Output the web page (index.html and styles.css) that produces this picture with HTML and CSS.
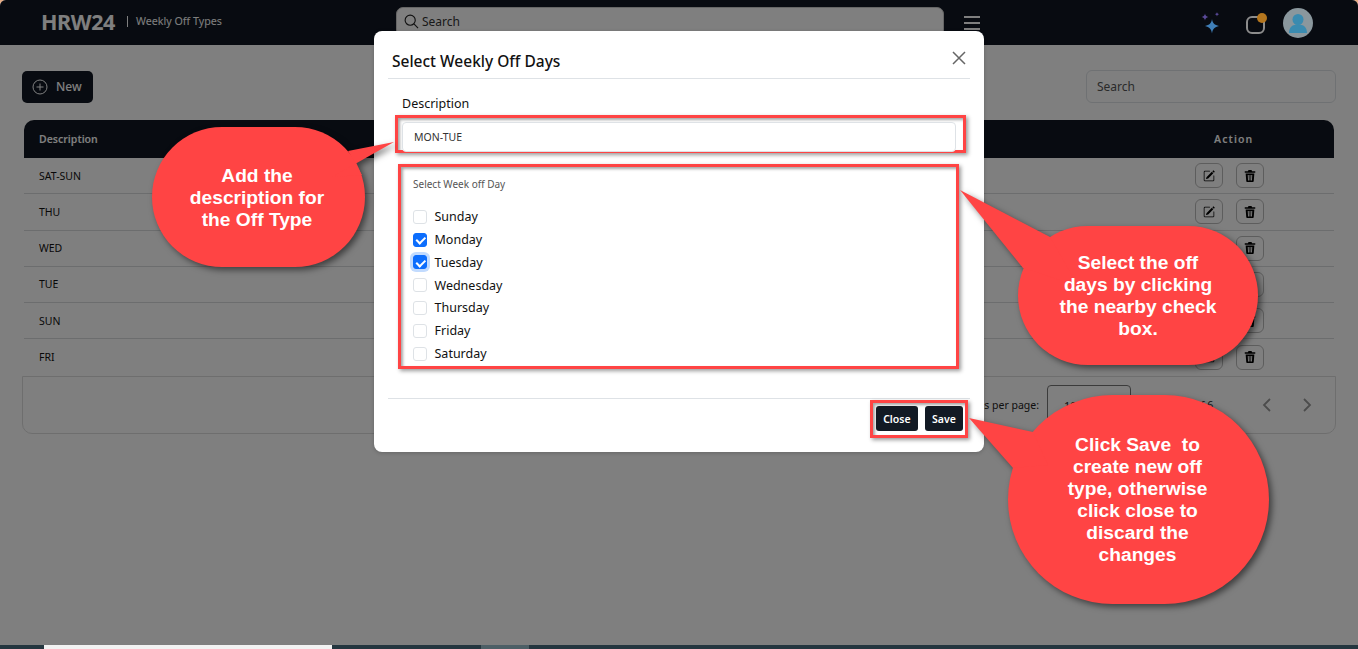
FILE: index.html
```html
<!DOCTYPE html>
<html lang="en">
<head>
  <meta charset="UTF-8" />
  <meta name="viewport" content="width=device-width, initial-scale=1.0"/>
  <title>Weekly Off Types • HRW24</title>
  <link rel="stylesheet" href="styles.css">
</head>

<body>
  <div class="screen">
    <header class="topbar">
      <div class="brand">HRW24</div>
      <div class="page-name">Weekly Off Types</div>
      <div class="top-search">
        <svg class="top-search-icon" viewBox="0 0 16 16"><circle cx="6.6" cy="6.6" r="5.4"/><path d="M10.6 10.6 15 15"/></svg>
        <span>Search</span>
      </div>
      <svg class="menu-icon" viewBox="0 0 16 14"><path d="M0 1h16M0 7h16M0 13h16"/></svg>
      <div class="top-icons">
        <svg class="sparkle" viewBox="0 0 24 26">
          <path class="star-blue" d="M13 8c.6 4 2.500 6 7 7-4.500 1-6.400 3-7 7.500-.6-4.500-2.500-6.500-7-7.500 4.500-1 6.400-3 7-7z"/>
          <path class="star-purple" d="M6 2.500c.3 2 1.200 3 3.400 3.500-2.200.5-3.100 1.500-3.400 3.500C5.700 7.500 4.800 6.500 2.600 6 4.800 5.500 5.700 4.500 6 2.500z"/>
          <path class="star-purple" d="M18 1c.2 1.200.7 1.800 2.200 2.200-1.500.4-2 1-2.200 2.200-.2-1.200-.7-1.800-2.200-2.200 1.500-.4 2-1 2.200-2.200z"/>
        </svg>
        <div class="notify"><span class="notify-dot"></span></div>
        <div class="avatar">
          <svg viewBox="0 0 30 30"><circle cx="15" cy="11.500" r="5.500"/><path d="M6 25c0-6 3.500-8.500 9-8.500s9 2.500 9 8.500z"/></svg>
        </div>
      </div>
    </header>

    <main class="content">
      <div class="toolbar">
        <button class="new-btn">
          <svg viewBox="0 0 16 16"><circle cx="8" cy="8" r="7"/><path d="M8 4.500v7M4.500 8h7"/></svg>
          New
        </button>
        <input class="table-search" type="text" placeholder="Search" />
      </div>

      <div class="table-wrap">
        <table class="off-table">
          <thead>
            <tr><th>Description</th><th class="action-col">Action</th></tr>
          </thead>
          <tbody>
            <tr><td>SAT-SUN</td><td class="action-col"><div class="actions"><button class="icon-btn"><svg viewBox="0 0 16 16"><use href="#ico-edit"/></svg></button><button class="icon-btn"><svg viewBox="0 0 16 16"><use href="#ico-trash"/></svg></button></div></td></tr>
            <tr><td>THU</td><td class="action-col"><div class="actions"><button class="icon-btn"><svg viewBox="0 0 16 16"><use href="#ico-edit"/></svg></button><button class="icon-btn"><svg viewBox="0 0 16 16"><use href="#ico-trash"/></svg></button></div></td></tr>
            <tr><td>WED</td><td class="action-col"><div class="actions"><button class="icon-btn"><svg viewBox="0 0 16 16"><use href="#ico-edit"/></svg></button><button class="icon-btn"><svg viewBox="0 0 16 16"><use href="#ico-trash"/></svg></button></div></td></tr>
            <tr><td>TUE</td><td class="action-col"><div class="actions"><button class="icon-btn"><svg viewBox="0 0 16 16"><use href="#ico-edit"/></svg></button><button class="icon-btn"><svg viewBox="0 0 16 16"><use href="#ico-trash"/></svg></button></div></td></tr>
            <tr><td>SUN</td><td class="action-col"><div class="actions"><button class="icon-btn"><svg viewBox="0 0 16 16"><use href="#ico-edit"/></svg></button><button class="icon-btn"><svg viewBox="0 0 16 16"><use href="#ico-trash"/></svg></button></div></td></tr>
            <tr><td>FRI</td><td class="action-col"><div class="actions"><button class="icon-btn"><svg viewBox="0 0 16 16"><use href="#ico-edit"/></svg></button><button class="icon-btn"><svg viewBox="0 0 16 16"><use href="#ico-trash"/></svg></button></div></td></tr>
          </tbody>
        </table>
      </div>

      <div class="pager">
        <span class="per-page">Items per page:</span>
        <div class="per-page-select">10</div>
        <span class="range">1 – 6 of 6</span>
        <svg class="chevron" viewBox="0 0 10 16"><path d="M8 2 2 8l6 6"/></svg>
        <svg class="chevron" viewBox="0 0 10 16"><path d="m2 2 6 6-6 6"/></svg>
      </div>
    </main>

    <div class="taskbar">
      <div class="task-window"></div>
      <div class="task-active"></div>
    </div>

    <!-- modal + dimmed page -->
    <div class="backdrop">
      <div class="modal">
        <div class="modal-header">
          <h2>Select Weekly Off Days</h2>
          <svg class="modal-close" viewBox="0 0 14 14"><path d="m1 1 12 12M13 1 1 13"/></svg>
        </div>
        <label class="desc-label" for="desc">Description</label>
        <div class="mark mark-desc">
          <input id="desc" class="desc-input" type="text" value="MON-TUE" />
        </div>
        <div class="mark mark-days">
          <div class="days-title">Select Week off Day</div>
          <label class="day"><input type="checkbox" />Sunday</label>
          <label class="day"><input type="checkbox" checked />Monday</label>
          <label class="day"><input class="focused" type="checkbox" checked />Tuesday</label>
          <label class="day"><input type="checkbox" />Wednesday</label>
          <label class="day"><input type="checkbox" />Thursday</label>
          <label class="day"><input type="checkbox" />Friday</label>
          <label class="day"><input type="checkbox" />Saturday</label>
        </div>
        <div class="modal-footer">
          <div class="mark mark-btns">
            <button class="dark-btn">Close</button>
            <button class="dark-btn">Save</button>
          </div>
        </div>
      </div>
    </div>

    <!-- annotation bubbles -->
    <div class="callout callout-desc">
      <svg viewBox="0 0 213 140"><rect width="213" height="140" rx="70" ry="70"/><polygon points="242,15 196,24 210,48 180,50"/></svg>
      <p>Add the<br>description for<br>the Off Type</p>
    </div>
    <div class="callout callout-days">
      <svg viewBox="0 0 240 139"><rect width="240" height="139" rx="69.500" ry="69.500"/><polygon points="-58,-36 32,11 60,60 5,42"/></svg>
      <p>Select the off<br>days by clicking<br>the nearby check<br>box.</p>
    </div>
    <div class="callout callout-save">
      <svg viewBox="0 0 261 209"><rect width="261" height="209" rx="104.500" ry="104.500"/><polygon points="-39,23 25,37 40,70 5,73"/></svg>
      <p>Click Save &nbsp;to<br>create new off<br>type, otherwise<br>click close to<br>discard the<br>changes</p>
    </div>
  </div>

  <svg class="icon-defs" width="0" height="0">
    <symbol id="ico-edit" viewBox="0 0 16 16">
      <path d="M15.502 1.940a.5.5 0 0 1 0 .706L14.459 3.690l-2-2L13.502.646a.5.5 0 0 1 .707 0l1.293 1.293zm-1.750 2.456-2-2L4.939 9.210a.5.5 0 0 0-.121.196l-.805 2.414a.25.25 0 0 0 .316.316l2.414-.805a.5.5 0 0 0 .196-.12l6.813-6.814z"/>
      <path d="M1 13.500A1.500 1.500 0 0 0 2.500 15h11a1.500 1.500 0 0 0 1.500-1.500v-6a.5.5 0 0 0-1 0v6a.5.5 0 0 1-.5.5h-11a.5.5 0 0 1-.5-.5v-11a.5.5 0 0 1 .5-.5H9a.5.5 0 0 0 0-1H2.500A1.500 1.500 0 0 0 1 2.500v11z"/>
    </symbol>
    <symbol id="ico-trash" viewBox="0 0 16 16">
      <path fill-rule="evenodd" d="M6 0h4l.8 1.500H15V3.500H1V1.500h4.200zM2.200 4.500h11.600L13 14.500c-.1.900-.7 1.500-1.600 1.500H4.600c-.9 0-1.500-.6-1.600-1.500zM5 6.500l.4 7.500h1.200L6.300 6.500zm2.400 0V14h1.200V6.500zm2.300 0L9.400 14h1.200l.4-7.500z"/>
    </symbol>
  </svg>
</body>
</html>
```

FILE: styles.css
```css
* {
  box-sizing: border-box;
}

body {
  margin: 0;
  font-family: "Noto Sans", "Open Sans", sans-serif;
  background: #e8ae86;
  overflow: hidden;
}

button {
  font-family: inherit;
}

.screen {
  position: relative;
  width: 1358px;
  height: 649px;
  display: flex;
  flex-direction: column;
  overflow: hidden;
  background: #fff;
  border-radius: 6px 6px 0 0;
}

/* top bar */
.topbar {
  height: 45px;
  flex: none;
  display: flex;
  align-items: center;
  padding-left: 41px;
  background: #111722;
  color: #fff;
}

.brand {
  font-size: 21.500px;
  font-weight: 700;
  letter-spacing: -0.4px;
  line-height: 44px;
  width: 86px;
  margin-top: -1px;
}

.page-name {
  width: 269px;
  padding-left: 9px;
  font-size: 10.700px;
  margin-top: -3px;
  position: relative;
}

.page-name::before {
  content: "";
  position: absolute;
  left: 0;
  top: 2px;
  bottom: 1px;
  width: 1px;
  background: #fff;
}

.top-search {
  width: 548px;
  height: 30px;
  margin-top: -1px;
  display: flex;
  align-items: center;
  gap: 3px;
  padding: 0 0 2px 7px;
  background: #fff;
  border: 1px solid #ccc;
  border-radius: 7px;
  color: #333;
  font-size: 12px;
}

.top-search-icon {
  width: 15px;
  height: 15px;
  fill: none;
  stroke: #222;
  stroke-width: 1.200;
}

.menu-icon {
  width: 16px;
  height: 14px;
  margin-left: 20px;
  fill: none;
  stroke: #fff;
  stroke-width: 1.800;
}

/* these sit above the dimming layer, colours are as seen */
.top-icons {
  position: relative;
  z-index: 2;
  margin-left: auto;
  display: flex;
  align-items: center;
  padding-right: 45px;
}

.sparkle {
  width: 24px;
  height: 26px;
  margin-right: 23px;
  margin-top: 2px;
}

.star-blue {
  fill: #3f7fb8;
}

.star-purple {
  fill: #5a4a9a;
}

.notify {
  position: relative;
  width: 19px;
  height: 18px;
  margin-right: 18px;
  margin-top: 4px;
  border: 2px solid #8c8c8c;
  border-radius: 6px;
}

.notify-dot {
  position: absolute;
  top: -5px;
  right: -4px;
  width: 10px;
  height: 10px;
  border-radius: 50%;
  background: #b4761e;
}

.avatar {
  width: 30px;
  height: 30px;
  border-radius: 50%;
  background: #8a979d;
  overflow: hidden;
}

.avatar svg {
  display: block;
  fill: #3a8bb0;
}

/* page content */
.content {
  flex: 1;
  padding: 25px 22px 0;
}

.toolbar {
  display: flex;
  justify-content: space-between;
  align-items: center;
  height: 33px;
  margin-bottom: 17px;
}

.new-btn {
  width: 71px;
  height: 32px;
  display: flex;
  align-items: center;
  gap: 8px;
  padding: 0 0 0 10px;
  background: #111722;
  border: none;
  border-radius: 5px;
  color: #fff;
  font-size: 12px;
  font-weight: 500;
}

.new-btn svg {
  width: 16px;
  height: 16px;
  fill: none;
  stroke: #fff;
  stroke-width: 1;
}

.table-search {
  width: 250px;
  height: 33px;
  padding: 0 10px;
  background: #fff;
  border: 1px solid #dee2e6;
  border-radius: 6px;
  font-family: inherit;
  font-size: 12px;
}

.table-search::placeholder {
  color: #555;
}

.table-wrap {
  margin: 0 2px;
  height: 256px;
}

.off-table {
  width: 100%;
  border-collapse: separate;
  border-spacing: 0;
  font-size: 10.500px;
}

.off-table th {
  height: 38px;
  padding: 0 15px;
  background: #111722;
  color: #fff;
  font-size: 10.500px;
  font-weight: 600;
  text-align: left;
}

.off-table th:first-child {
  border-top-left-radius: 10px;
}

.off-table th:last-child {
  border-top-right-radius: 10px;
}

.off-table td {
  height: 36.250px;
  padding: 0 15px;
  color: #111;
  border-bottom: 1px solid #d8dadd;
}

.off-table tr:last-child td {
  border-bottom: none;
}

.off-table .action-col {
  width: 200px;
  padding: 0 0 0 61px;
}

.off-table th.action-col {
  padding-left: 80px;
  letter-spacing: 1.100px;
}

.actions {
  display: flex;
  gap: 13px;
}

.icon-btn {
  width: 28px;
  height: 25px;
  display: flex;
  align-items: center;
  justify-content: center;
  padding: 0;
  background: #fff;
  border: 1px solid #bbb;
  border-radius: 6px;
}

.icon-btn svg {
  width: 12px;
  height: 12px;
  fill: #000;
}

.pager {
  height: 58px;
  display: flex;
  align-items: center;
  background: #fff;
  border: 1px solid #ddd;
  border-radius: 0 0 10px 10px;
  font-size: 10.500px;
  color: #222;
}

.per-page {
  margin-left: auto;
  margin-right: 8px;
}

.per-page-select {
  width: 84px;
  height: 40px;
  margin-right: 38px;
  padding: 12px 0 0 16px;
  border: 1px solid #777;
  border-radius: 4px;
  font-size: 11px;
}

.range {
  width: 93px;
}

.chevron {
  width: 10px;
  height: 16px;
  margin-right: 30px;
  fill: none;
  stroke: #999;
  stroke-width: 1.800;
}

.chevron:last-child {
  margin-right: 23px;
}

.taskbar {
  height: 4px;
  flex: none;
  position: relative;
  z-index: 2;
  display: flex;
  background: #24363f;
  padding-left: 44px;
}

.task-window {
  width: 288px;
  background: #f2f2f2;
}

.task-active {
  width: 48px;
  margin-left: 149px;
  background: #4d5f66;
}

/* modal */
.backdrop {
  position: absolute;
  top: 0;
  left: 0;
  right: 0;
  bottom: 4px;
  z-index: 1;
  display: flex;
  justify-content: center;
  padding-top: 31px;
  background: rgba(0, 0, 0, 0.5);
}

.modal {
  width: 610px;
  height: 421px;
  padding: 0 14px;
  background: #fff;
  border-radius: 8px;
  box-shadow: 0 1px 4px rgba(0, 0, 0, 0.2);
}

.modal-header {
  height: 48px;
  display: flex;
  align-items: center;
  justify-content: space-between;
  padding: 12px 4px 0 4px;
  border-bottom: 1px solid #dee2e6;
}

.modal-header h2 {
  margin: 0;
  font-size: 15.500px;
  font-weight: 500;
  color: #111;
}

.modal-close {
  width: 14px;
  height: 14px;
  margin-top: -5px;
  fill: none;
  stroke: #666;
  stroke-width: 1.500;
}

.desc-label {
  display: block;
  margin: 16px 0 2px 14px;
  font-size: 12.500px;
  line-height: 18px;
  color: #111;
}

.mark {
  border: 3px solid #ff4444;
  box-shadow: 2px 2px 4px rgba(0, 0, 0, 0.4), inset 2px 2px 3px rgba(0, 0, 0, 0.35);
}

.mark-desc {
  width: 571px;
  height: 38px;
  margin-left: 7px;
  padding: 4px 7px 0 4px;
}

.desc-input {
  width: 100%;
  height: 30px;
  padding: 0 11px;
  border: 1px solid #dee2e6;
  border-radius: 4px;
  font-family: inherit;
  font-size: 10.500px;
  color: #333;
}

.mark-days {
  width: 561px;
  height: 205px;
  margin: 11px 0 0 10px;
  padding: 10px 0 0 12px;
}

.days-title {
  height: 28.400px;
  font-size: 10px;
  line-height: 14px;
  color: #555;
}

.day {
  height: 22.800px;
  display: flex;
  align-items: center;
  gap: 7.500px;
  font-size: 12.500px;
  color: #111;
}

.day input {
  appearance: none;
  position: relative;
  width: 14px;
  height: 14px;
  margin: 0;
  background: #fff;
  border: 1px solid #dee2e6;
  border-radius: 3px;
}

.day input:checked {
  background: #0d6efd;
  border-color: #0d6efd;
}

.day input:checked::after {
  content: "";
  position: absolute;
  left: 3.500px;
  top: 1.500px;
  width: 4px;
  height: 6.500px;
  border: solid #fff;
  border-width: 0 2px 2px 0;
  transform: rotate(45deg);
}

.day input.focused {
  box-shadow: 0 0 0 3px #c2dbfe;
}

.modal-footer {
  margin-top: 29px;
  padding-top: 1px;
  display: flex;
  justify-content: flex-end;
  border-top: 1px solid #dee2e6;
}

.mark-btns {
  width: 98px;
  height: 38px;
  margin-right: 2px;
  display: flex;
  gap: 7px;
  padding: 3px 2px 0 3px;
}

.dark-btn {
  height: 25px;
  flex: 1 1 auto;
  padding: 0;
  background: #121a24;
  border: none;
  border-radius: 3px;
  color: #fff;
  font-size: 10.500px;
  font-weight: 600;
}

/* annotation bubbles */
.callout {
  position: absolute;
  z-index: 3;
  display: flex;
  align-items: center;
  justify-content: center;
}

.callout svg {
  position: absolute;
  top: 0;
  left: 0;
  width: 100%;
  height: 100%;
  overflow: visible;
  fill: #ff4444;
  filter: drop-shadow(3px 3px 3px rgba(0, 0, 0, 0.5));
}

.callout p {
  position: relative;
  margin: 0;
  font-family: "Liberation Sans", Arial, sans-serif;
  font-size: 19.200px;
  font-weight: 700;
  line-height: 22px;
  color: #fff;
  text-align: center;
}

.callout-desc {
  left: 152px;
  top: 127px;
  width: 213px;
  height: 140px;
  padding-right: 3px;
  padding-top: 2px;
}

.callout-days {
  left: 1018px;
  top: 226px;
  width: 240px;
  height: 139px;
}

.callout-save {
  left: 1008px;
  top: 395px;
  width: 261px;
  height: 209px;
  padding-right: 2px;
  padding-top: 1px;
}

.icon-defs {
  position: absolute;
}
```
